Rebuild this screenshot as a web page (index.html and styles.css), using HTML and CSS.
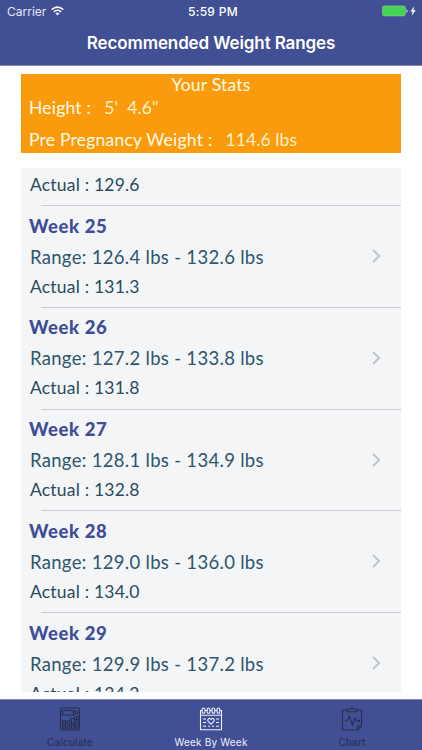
FILE: index.html
```
<!DOCTYPE html>
<html lang="en">
<head>
  <meta charset="UTF-8">
  <title>Recommended Weight Ranges</title>
  <link rel="stylesheet" href="styles.css">
</head>
<body>
  <header>
    <div class="status-bar">
      <div class="carrier">
        <span>Carrier</span>
        <svg width="13" height="10" viewBox="0 0 13 10" fill="none" stroke="#fff" stroke-width="1.5">
          <path d="M.7 3.6Q6.5-1.4 12.3 3.6M2.8 5.8Q6.5 2.8 10.2 5.8"/>
          <path d="M6.5 9.5L4.4 7.3Q6.5 5.8 8.6 7.3Z" fill="#fff" stroke="none"/>
        </svg>
      </div>
      <span class="time">5:59 PM</span>
      <svg class="battery" width="35" height="12" viewBox="0 0 35 12">
        <rect x=".4" y=".9" width="23" height="10" rx="1.8" fill="#43d551" stroke="#8bbfa0" stroke-width=".7"/>
        <path d="M24.3 4.2q1.4.4 1.4 1.8t-1.4 1.8z" fill="#b6d9cd"/>
        <path d="M32.3 1.2l-4 5.3h2.3l-1 4.3 4.2-5.6h-2.4z" fill="#fff"/>
      </svg>
    </div>
    <h1>Recommended Weight Ranges</h1>
  </header>

  <main>
    <section class="stats">
      <h2>Your Stats</h2>
      <p class="height"><span class="label">Height :</span><span class="value">5'&nbsp; 4.6"</span></p>
      <p class="weight"><span class="label">Pre Pregnancy Weight :</span><span class="value">114.6 lbs</span></p>
    </section>

    <section class="weeks">
      <div class="week partial">
        <p class="actual">Actual : 129.6</p>
      </div>
      <div class="week">
        <h3>Week 25</h3>
        <p class="range">Range: 126.4 lbs - 132.6 lbs</p>
        <p class="actual">Actual : 131.3</p>
        <svg class="chevron" width="9" height="14" viewBox="0 0 9 14"><path d="M1 1l6.2 6L1 13"/></svg>
      </div>
      <div class="week">
        <h3>Week 26</h3>
        <p class="range">Range: 127.2 lbs - 133.8 lbs</p>
        <p class="actual">Actual : 131.8</p>
        <svg class="chevron" width="9" height="14" viewBox="0 0 9 14"><path d="M1 1l6.2 6L1 13"/></svg>
      </div>
      <div class="week">
        <h3>Week 27</h3>
        <p class="range">Range: 128.1 lbs - 134.9 lbs</p>
        <p class="actual">Actual : 132.8</p>
        <svg class="chevron" width="9" height="14" viewBox="0 0 9 14"><path d="M1 1l6.2 6L1 13"/></svg>
      </div>
      <div class="week">
        <h3>Week 28</h3>
        <p class="range">Range: 129.0 lbs - 136.0 lbs</p>
        <p class="actual">Actual : 134.0</p>
        <svg class="chevron" width="9" height="14" viewBox="0 0 9 14"><path d="M1 1l6.2 6L1 13"/></svg>
      </div>
      <div class="week">
        <h3>Week 29</h3>
        <p class="range">Range: 129.9 lbs - 137.2 lbs</p>
        <p class="actual">Actual : 134.2</p>
        <svg class="chevron" width="9" height="14" viewBox="0 0 9 14"><path d="M1 1l6.2 6L1 13"/></svg>
      </div>
    </section>
  </main>

  <nav>
    <a class="tab">
      <svg width="24" height="24" viewBox="0 0 24 24">
        <rect x="2.5" y="1" width="19" height="22" rx="1"/>
        <path d="M4.5 3.5h11v4.5h-11z"/>
        <circle cx="18.3" cy="5.5" r="1.5"/>
        <path d="M4.5 13.8h3v3h-3zM9 13.8h3v3H9zM4.5 18.3h3v3h-3zM9 18.3h3v3H9zM13.5 11.5h3v5.3h-3zM13.5 18.3h3v3h-3zM18 9.5h2.2v3H18zM18 14h2.2v7.3H18zM11.5 11.2h2M16 9.8h1"/>
      </svg>
      <span>Calculate</span>
    </a>
    <a class="tab active">
      <svg width="24" height="24" viewBox="0 0 24 24">
        <path d="M3 3.5H1.5v19.2h21V3.5H21M6 3.5h2M11 3.5h2M16 3.5h2M1.5 8.3h21"/>
        <rect x="3.2" y="1" width="2.7" height="5.3" rx="1.3"/>
        <rect x="8.2" y="1" width="2.7" height="5.3" rx="1.3"/>
        <rect x="13.1" y="1" width="2.7" height="5.3" rx="1.3"/>
        <rect x="18.1" y="1" width="2.7" height="5.3" rx="1.3"/>
        <path d="M12 17.2l-2.8-2.9c-1.5-2 1.5-4.2 2.8-1.9 1.3-2.3 4.3-.1 2.8 1.9z"/>
        <path d="M4 12h3M17 12h3M4 15.5h3M17 15.5h3M4 19.3h3M9 19.3h2M13 19.3h2M17 19.3h3"/>
      </svg>
      <span>Week By Week</span>
    </a>
    <a class="tab">
      <svg width="24" height="24" viewBox="0 0 24 24">
        <path d="M7 3H2.5v20h15l4-4V3H17M17.5 23v-4h4"/>
        <path d="M7 4.7V2.5h3q2-2.8 4 0h3v2.2z"/>
        <path d="M4.8 14h2.4l2.2-5 3 9 2.6-7 1.6 3h1.4"/>
        <circle cx="19" cy="14" r=".8"/>
      </svg>
      <span>Chart</span>
    </a>
  </nav>
</body>
</html>
```
FILE: styles.css
```
* {
  box-sizing: border-box;
}

body {
  margin: 0;
  height: 750px;
  display: flex;
  flex-direction: column;
  overflow: hidden;
  background: #fff;
  font-family: Lato, sans-serif;
}

h1, h2, h3, p {
  margin: 0;
  white-space: pre;
}

header {
  height: 66px;
  background: #414f95;
  border-bottom: 1px solid #858db9;
  color: #fff;
  font-family: Inter, sans-serif;
}

.status-bar {
  height: 21px;
  padding: 1px 5px 0 7px;
  display: grid;
  grid-template-columns: 1fr auto 1fr;
  align-items: center;
  font-size: 12px;
}

.carrier {
  display: flex;
  align-items: center;
  gap: 5px;
  color: #e6e9f6;
}

.time {
  padding-left: 2px;
  font-weight: 500;
  letter-spacing: 0.3px;
}

.battery {
  justify-self: end;
}

h1 {
  line-height: 45px;
  text-align: center;
  font-size: 17px;
  font-weight: 600;
  letter-spacing: -0.12px;
}

main {
  flex: 1;
  padding: 8px 21px 0 21px;
}

.stats {
  height: 79px;
  padding-left: 8px;
  background: #f99b0c;
  color: #fffbe9;
  font-size: 17.5px;
  letter-spacing: 0.22px;
}

.stats h2 {
  margin-left: -8px;
  line-height: 22px;
  text-align: center;
  font-size: 17.5px;
  font-weight: 400;
}

.stats p {
  display: flex;
  gap: 13px;
}

.height {
  line-height: 24px;
}

.weight {
  margin-top: 8px;
  line-height: 24px;
}

.stats .value {
  color: #fff0c6;
  letter-spacing: 0.1px;
}

.weeks {
  height: 524px;
  margin-top: 15px;
  overflow: hidden;
  background: #f3f5f7;
}

.week {
  position: relative;
  height: 101.8px;
  padding: 4.6px 0 0 9px;
  color: #2f566b;
  background: linear-gradient(#c9cbce, #c9cbce) 20px 100% / 100% 1px no-repeat;
}

.week.partial {
  height: 38px;
  padding-top: 3px;
}

.week h3 {
  margin-left: -1px;
  line-height: 31px;
  font-size: 18.5px;
  font-weight: 900;
  letter-spacing: 0.6px;
  color: #414c97;
}

.range {
  line-height: 31px;
  font-size: 18.5px;
  letter-spacing: 0.3px;
}

.actual {
  line-height: 28px;
  font-size: 17.5px;
  letter-spacing: 0.2px;
  color: #2b4b5b;
}

.chevron {
  position: absolute;
  right: 20px;
  top: 43px;
  fill: none;
  stroke: #bec1c6;
  stroke-width: 1.8;
}

nav {
  height: 51px;
  display: flex;
  justify-content: space-between;
  background: #414f95;
  border-top: 1px solid #8289b1;
  font-family: Inter, sans-serif;
}

.tab {
  width: 140px;
  padding-top: 7px;
  display: flex;
  flex-direction: column;
  align-items: center;
  gap: 5px;
  color: #272d4e;
  font-size: 10px;
  line-height: 13px;
  letter-spacing: 0.2px;
}

.tab svg {
  fill: none;
  stroke: currentColor;
  stroke-width: 1.1;
}

.tab.active {
  color: #edf0ff;
}
```
